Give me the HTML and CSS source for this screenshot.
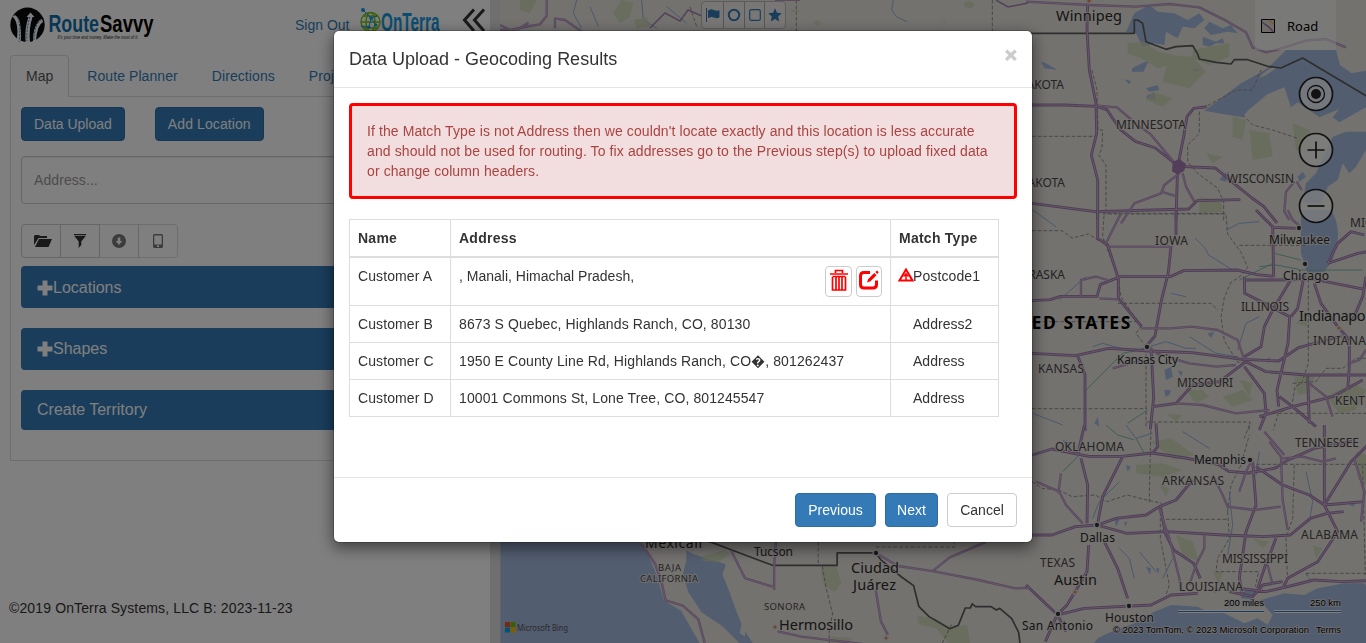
FILE: index.html
```html
<!DOCTYPE html>
<html lang="en">
<head>
<meta charset="utf-8">
<title>RouteSavvy</title>
<link rel="stylesheet" href="styles.css">
</head>
<body>
<div class="app">
  <aside class="sidebar">
    <header class="brand">
      <svg class="logo" width="146" height="36" viewBox="9 7 146 36">
        <circle cx="27.5" cy="24.8" r="17.2" fill="#0a0a0a"/>
        <path d="M15 15q5 3 5.500 12q1 9 0 15h-4q2-13-.5-20q-2-5-4-5zM25.500 42q-1-14 3-25l-2 0 4-4.500 4 4.500h-2q-4 12-2.500 25zM33 41q0-13 5-19q2-3 4-3l1 3q-6 3-7 19z" fill="#fff"/>
        <path d="M18 18q3 8 1 24M30 17q-4 12-3 24M41 20q-7 5-7 21" fill="none" stroke="#247fb8" stroke-dasharray="2 1.300"/>
        <text class="logo-a" x="48.500" y="32.300" textLength="50.500" lengthAdjust="spacingAndGlyphs">Route</text>
        <text class="logo-b" x="100" y="32.300" textLength="53.500" lengthAdjust="spacingAndGlyphs">Savvy</text>
        <text class="logo-c" x="57.500" y="39" textLength="81" lengthAdjust="spacingAndGlyphs">It's your time and money. Make the most of it.</text>
      </svg>
      <a class="signout">Sign Out</a>
      <svg class="onterra" width="82" height="30" viewBox="359 6 82 30">
        <g fill="none" stroke="#7cc522" stroke-width="1.500"><circle cx="370.500" cy="22" r="9.500"/><ellipse cx="370.500" cy="22" rx="4.500" ry="9.500"/><path d="M361 22h19M363 16h15M363 28h15"/></g>
        <path d="M363 10l8 8 6-2M371 18l-2 9-8-1M371 18l5 7" fill="none" stroke="#149be0"/>
        <g fill="#149be0"><circle cx="363" cy="10" r="2"/><circle cx="371" cy="18" r="1.800"/><circle cx="369" cy="27" r="1.500"/><circle cx="376" cy="25" r="1.500"/></g>
        <text class="onterra-t" x="381" y="30.500" textLength="58.500" lengthAdjust="spacingAndGlyphs">OnTerra</text>
      </svg>
      <svg class="collapse" width="24" height="28" viewBox="0 0 24 28"><path d="M12 2.500L2.500 13 12 24M22 2.500L12.500 13 22 24" fill="none" stroke="#333" stroke-width="3"/></svg>
    </header>
    <nav class="tabs"><a class="tab active">Map</a><a class="tab">Route Planner</a><a class="tab">Directions</a><a class="tab">Projects</a></nav>
    <section class="panel">
      <div class="actions"><button class="btn primary">Data Upload</button><button class="btn primary">Add Location</button></div>
      <div class="address">Address...</div>
      <div class="tools">
        <span class="tool"><svg width="18" height="14" viewBox="0 0 18 14"><path d="M0 11V2l1-1h4l1 1h7v2H4.500zM1 13L5 5h13l-3.500 8z" fill="#333"/></svg></span>
        <span class="tool"><svg width="14" height="14" viewBox="0 0 14 14"><path d="M1 0h12v1.300H1zM1.300 2h11.400L8.300 7.500V11L5.700 14V7.500z" fill="#333"/></svg></span>
        <span class="tool off"><svg width="14" height="14" viewBox="0 0 14 14"><path fill-rule="evenodd" d="M7 0a7 7 0 1 0 0 14A7 7 0 1 0 7 0zM5.700 3.500h2.600V7h2L7 11 3.700 7h2z" fill="#333"/></svg></span>
        <span class="tool off"><svg width="14" height="14" viewBox="0 0 14 14"><path fill-rule="evenodd" d="M3 0h8l1 1v12l-1 1H3l-1-1V1zM3.300 1.500v9h7.400v-9zM6 11.300v1.700h2v-1.700z" fill="#333"/></svg></span>
      </div>
      <div class="bar first"><svg width="16" height="16" viewBox="0 0 16 16"><path d="M5.500 .5h5v5H15.500v5h-5v5h-5v-5H.5v-5h5z" fill="#fff"/></svg>Locations</div>
      <div class="bar"><svg width="16" height="16" viewBox="0 0 16 16"><path d="M5.500 .5h5v5H15.500v5h-5v5h-5v-5H.5v-5h5z" fill="#fff"/></svg>Shapes</div>
      <div class="bar last">Create Territory</div>
    </section>
    <footer class="copyright">©2019 OnTerra Systems, LLC B: 2023-11-23</footer>
  </aside>
  <div class="splitter"></div>
  <main class="map">
    <svg width="866" height="643" viewBox="500 0 866 643">
      <defs>
        <g id="roads-n">
          <path d="M185 10L183 90 190 210 210 310 212 400 196 465 215 540V660M18 315h100l95 4 30 10 40 60 45 35 60 20 70 55 110 5 60 50 50 40 35 25 40 50M18 610l190 25 280-8 25-25 130-3M455 500l18-90 10-60 20-25 40-5M455 500l-5 160"/>
        </g>
        <g id="roads-n-thin">
          <path d="M0 5l190 10 140 5 100-8 90 10 80 40 60 35 20 45 40 15 40-10 80-25 60-5 60 25M213 317l60 5 70 60 30 20 50 60 30 35M460 520l-45 35-10 25-80 30-40 60M470 520l10 40 25 45M405 575l50 15M805 545l-25 30-5 60 15 25M812 545l15 25"/>
        </g>
        <g id="roads-c">
          <path d="M215 0v85l30 20 32 100v60l70 85M18 272l55-3 30-10h110l10-35 60-24h150l40-18 160-2 60 14 50 5M450 0v75M435 108l-8 80-20 80-20 110-30 35M18 430l130 7 100-22 80 5 40 3 130 5 150 20 110 5 60-40 130-35M155 438l22 55v170M690 0l50 50 3 150M740 52l75 3M655 200l1 50 40 20 95 50-5 80-33 140 5 50M656 210h90l120-2 150 30M865 220l20 60 50 70M940 355l30 35v80l-5 70M835 195l-20 100-20 25M800 200l-60 100-25 50-10 60-50 30M660 455l60 30 120 10h180M375 413l8 150-10 95M380 590l70-10 50-55 80-10 80-60M655 470l60 80 5 60-20 50M760 560l40 30 70 60M700 620l100-30 120-30 90-50M845 500l5 140M905 160l30-60 40-35 40 10M905 160l90-30 30-5M1020 200l-10 60-30 70"/>
        </g>
        <g id="roads-c-thin">
          <path d="M165 260v-50l45-10 35 10M250 110h180M220 265l55 3M240 100l45-90M345 355h90l60-5 80 10 60 30 20 60M260 475l90-25M390 430l100 30 80 10 60-5M450 580l80 5 100 25 100-10M785 0l15 30 30 25M970 460l30-10 20-30M850 520l50 40 20 60"/>
        </g>
        <g id="roads-s">
          <path d="M18 90l60-18 110 22h100l90-10 100 15 100 20 30 20 60 5 80-15 40-25 80-35 110-20M380 85l15-20-5-70M155 90l20-90M165 100l20 80-2 115M290 95l-60 120-15 80M215 300l55-20 90-10 40-25 50-20 50-60M18 330h60l70-25 65-5 90 25 120-5 170 10 120 5 80-5 60-50 50-15 50-5M403 245l15 80 25 50 60 40 20 45M188 360l-5 80-60 100-30 30-35 80M95 570l80-20 200-10 60-30 80-5M235 350l40 80 30 90M0 480l95 90 25 50M680 110l10 130-30 80-20 140 10 50M690 125l80 55 80 30 45 30M895 0v240l40 80-60 90-90 50-15 30M895 240l80-130 50-50M895 240l120-10M640 490l80 10 85-20 60-15 80 5 80-3M770 470l-60 10-30 35-70-15M725 400l-30 90M750 340l-30 80"/>
        </g>
        <g id="roads-s-thin">
          <path d="M30 170l70 30 20 40 50 55M105 145l-8 60M400 250l30 90 30 120 5 35M535 330v40l-25 50-20 60M560 150l30 60 15 35 80 10 80-10M640 200l20-60 20-40M730 50l35 45 5 130 15 90M770 100l60-5 60 15 40-10M985 100l30 100-10 90M725 420l15 60M715 20l60 70"/>
        </g>
        <g id="roads-sw">
          <path d="M440 25l40 60 20 60 10 45 50 15 45 40 20 75M700 45l40 80 80 25M830 20l-5 70 0 70M1125 55l60 35 100 15 130 25 110 25 43-2M1285 105l50-40 105-45M1120 160l15 90 20 40M835 280l70 15 180 22"/>
        </g>
        <g id="roads-nw"><path d="M180 75l30 15 60-12 30-5 20-25 0-50M345 85v-30l30 5 50 35M180 90l55-2 30-20"/></g>
      </defs>
      <rect class="land" x="500" width="866" height="643"/>
      <g transform="translate(490 535) scale(.3444)">
        <path class="water" d="M30 0H425l35 60 25 60 20 70 50 30 60 105H30zM570 45l20 10 45 15 50 15-10 30 20 50 20 55 20 50 35 55-35 0-60-60-60-40-40-60-15-50 10-40z"/>
        <path class="land" d="M735 235l10 20-5 40-15-10zM745 260l30-10 15 30-30 10z"/>
        <path class="green" d="M620 60l60-15 20 10-40 25-45-5zM965 90h40l15 50-20 25-30-20-10-40zM1240 235l50 5 50 30 45-10 10 60-60 0-40-50-50-10zM990 295l60 5-10 20-50-2z"/>
      </g>
      <g transform="translate(1026 0) scale(.33333)">
        <path class="water" d="M325 40l45-25 25 20 50 5 40 20 35-20 15 20-30 25-35-5-15 35-35-20-5 40-30-5-35 10-20-40-30-5zM550 65l40 20 25-10 20 25-30-5-50 10-20-20zM530 110l40 15 20-10 5 15-25 0-20 10-20-5zM535 332L625 265 645 250 690 225 725 205 780 150H930l12 45 35 25 43-8v110l-80 45-20-15 20-25-60 25-65-45-20 15-20-60-50 20-60 50-15 20-60-10zM920 410l40-15 60 0v55l-30 50-20 20-20-30-15 50-30 20-20 50-40 0-15 0 10-60 30-30z"/>
        <path class="water" d="M318 205l30-15 20-8-15 33h-35zM45 185l15 5 35 20-40-5zM360 265l35-10 5 15-30 5zM365 285l20-5 5 20-30-5zM295 238l20 5-5 10zM500 205l30 5-25 5zM580 540l15-20 15-5-10 30zM815 530l15-15 10 15-20 15z"/>
        <path class="green" d="M305 130l50-5 40 30 50 10-10 30-40 10-50-30-40-15zM430 165l70 5 40 45-50 50-80-20zM500 150l110-20v40l-60 25-50-20zM380 275l60 20-30 25-50-20zM620 350l40 10-10 60-30-10zM670 390l60 10 10 70-60 10zM800 370l50 20 10 70-50-10zM520 590l65 10 5 35-70 5zM540 460l50 10-30 20z"/>
        <path class="land" d="M695 235l30-25 25-12 0 6-30 22z"/>
        <path class="border" d="M0 100h325V60h10l15 10 10 55 60 23 30-8 50-3 15 25 5 15 50 10 45 5 10-13 40 0 60 20 40 5 65-30 230 137"/>
        <path class="state" d="M198 210l15 60 3 120 14 0-2 55-10 20 22 30v145h350M18 409h195M520 335v65l-35 35 0 50 30 35 60 45 18 40v60M650 345l30 30 60 15 75 25M530 325l100-55 50 0 25-60"/>
      </g>
      <g transform="translate(1026 210) scale(.33333)">
        <path class="water" d="M825 0h90q25 40 20 90l-15 60-25 35-50 5-20-60z"/>
        <path class="river" d="M20 0l70 50M508 85l30 30 10 20 80 50M600 60l40-20 60-5M100 270l80-70M700 320l-40 20-25 80M200 410l30-10 90 25 100-30 60 20 30 0M490 380l80 50 65 10M20 610l90 35M435 250l45 10"/>
        <path class="river teal" d="M180 540l60-60 50-50 70-15M700 170l50-5 80 15 180 0M745 130l80 20M640 210l100-50M365 600l-60 40"/>
        <path class="water" d="M415 480l20-10 5 30-20 10zM415 540l20 0-5 15-12 5zM205 640l10-20 5 30zM545 370l20-5-10 20zM455 480l15 5-5 15zM720 450l12-10-3 20z"/>
        <path class="green" d="M480 540l50 0 20 20-40 20zM590 560l60-20 30 30-60 20zM640 510l40 10-10 40zM810 340l30-30 5 40zM805 500l60-5-10 50-40 10zM420 610l50 5-20 20zM900 560l80-40 40 20-30 60-50 10z"/>
        <path class="state" d="M18 62h90l30 22 50-12 30 20M235 0l-5 80 45 120 10 60 60 90-15 20 30 40v245M230 12h370l5 60 40 55 20 45-20 25-30 20-20 45-10 60 10 70 40 65 40 0M275 280h280l20 20M640 106l200 0M847 190v270l-20 60-20 10-10 60-40 20-15 50M18 596h345M362 636h310l-3 24M800 520l70-5 30-40 50 0 40-30h30M740 610h280M18 335h320"/>
      </g>
      <g transform="translate(1026 425) scale(.33333)">
        <path class="water" d="M200 660l15-20 30-15 80-30 60-35 50-20 80 5 40 20 40-10 50 20 40-10 20-40 70-20 60 5 40-20 80-15 60 0 20 30 50 20 50 30v106z"/>
        <path class="land" d="M590 530l60-30 50 25 40 45-15 30-30-20-40 15-60-30z"/>
        <path class="water" d="M645 500l35-10 15 15-20 18-30-3zM265 280l15 5-10 20zM295 290l10 0-8 15zM300 120l15 5-10 15zM360 425l15 5-3 20zM390 430l10 0-3 18zM525 600l-10 5 0-5zM560 490l15 5-10 10zM110 45l20 5-10 15zM970 240l15-15 0 20z"/>
        <path class="green" d="M375 50l60-10 70 50-60 15zM330 120l80-5 60 20-60 20-80-10zM450 330l50 20 20 60-50-20zM400 180l30 10-10 25zM860 360l30 10-20 30zM990 80l30 10v90l-25-20zM680 340l50 10-20 20zM560 440l30 0-10 40z"/>
        <path class="state" d="M375 0l-5 210 0 25M18 170l30 20 50 5 40 20 70-5 35 20 60-20 60 15 45 10M403 245v95l15 80 12 60-10 30M420 283h185M605 260l10-80 30-60 25-90M605 260l5 80-35 60-5 40h128l-10 45M690 118h330M805 120l-5 160-20 60 5 130M1010 120l8 330M840 445h180M840 445l15 25M670 0l-15 40"/>
        <path class="river" d="M300 0l30 40 50-15M200 280l20-50 60-60M280 370l30 30 15 60M340 380l50 60M440 400l-30 60M610 200l10 100-15 90M700 80l-10 70M840 140l20 90-10 60M470 20l80 50"/>
        <path class="river teal" d="M240 0l35 30 50 15M160 90l-50 50M330 40l25 45"/>
      </g>
      <g transform="translate(640 0) scale(.33333)">
        <path class="state" d="M150 20l20 60M469 0v95M1057 0v95"/>
        <path class="river" d="M5 0l5 60 40 25M760 0l-5 30 15 20 30 15M-190 0l-10 40 25 45M-150 20l25 60M80 20l60 50"/>
        <path class="green" d="M970 10l20-8 15 10-10 12-20-2zM520 65l15-5 10 12-15 6zM905 60l10 3 3 10zM-360 0l50 0-20 40-30-10zM-80 40l25-40 35 10-10 40-30 20zM450 30l30 0-10 10zM-20 60l40-10 10 30-40 5z"/>
      </g>
      <g transform="translate(490 535) scale(.3444)">
        <path class="border" d="M600 10l40 10 60 23 120 45h188V52h112l15 20 60 50 35 25 15 60 30 30 60 35 25-10 20-50h15l5-12 10 8h45l15 10 10-5 35 30 20 40 5 40"/>
        <path class="state" d="M953 20v65M1120 35h228V0M965 90l10 60 20 80-10 40 0 50M1340 260l-30 60"/>
      </g>
      <g transform="translate(1026 0) scale(.33333)"><use href="#roads-n" class="road"/><use href="#roads-n" class="road-in"/><use href="#roads-n-thin" class="road thin"/><use href="#roads-n-thin" class="road-in"/><path d="M440 485l20-8 20 15-5 20-20 12-17-10z" fill="#a67db2"/></g>
      <g transform="translate(1026 210) scale(.33333)"><use href="#roads-c" class="road"/><use href="#roads-c" class="road-in"/><use href="#roads-c-thin" class="road thin"/><use href="#roads-c-thin" class="road-in"/></g>
      <g transform="translate(1026 425) scale(.33333)"><use href="#roads-s" class="road"/><use href="#roads-s" class="road-in"/><use href="#roads-s-thin" class="road thin"/><use href="#roads-s-thin" class="road-in"/></g>
      <g transform="translate(490 535) scale(.3444)"><use href="#roads-sw" class="road thin"/><use href="#roads-sw" class="road-in"/></g>
      <g transform="translate(440 0) scale(.33333)"><use href="#roads-nw" class="road thin"/><use href="#roads-nw" class="road-in"/></g>
      <path class="road-one" d="M650 28l15-15 15 8 8-11 14 6M775 0h25M996 0l12 7 20-4"/>
      <g class="dot"><circle cx="1299" cy="228" r="2.800"/><circle cx="1305" cy="264" r="2.800"/><circle cx="1147" cy="347" r="2.800"/><circle cx="1250" cy="460" r="2.800"/><circle cx="1097" cy="525" r="2.800"/><circle cx="1129" cy="606" r="2.800"/><circle cx="1058" cy="614" r="2.800"/><circle cx="876" cy="553" r="2.800"/></g>
      <g class="dot orange"><circle cx="1339" cy="328" r="2.200"/><circle cx="1075" cy="592" r="2.200"/><circle cx="775" cy="627" r="2.200"/><circle cx="886" cy="638" r="2.200"/><circle cx="1089" cy="1" r="2.200"/></g>
      <g class="lbl state-l">
        <text x="1064" y="89" text-anchor="end">DAKOTA</text><text x="1065" y="187" text-anchor="end">DAKOTA</text>
        <text x="1116" y="129" textLength="70">MINNESOTA</text><text x="1227" y="183" textLength="67">WISCONSIN</text>
        <text x="1155" y="245" textLength="33">IOWA</text><text x="1065" y="279" text-anchor="end">NEBRASKA</text>
        <text x="1241" y="311" textLength="48">ILLINOIS</text><text x="1350" y="227">MICH</text><text x="1313" y="345" textLength="53">INDIANA</text>
        <text x="1038" y="373" textLength="46">KANSAS</text><text x="1177" y="387" textLength="56">MISSOURI</text><text x="1335" y="405">KENTUCKY</text>
        <text x="1055" y="451" textLength="69">OKLAHOMA</text><text x="1295" y="447" textLength="64">TENNESSEE</text><text x="1162" y="485" textLength="62">ARKANSAS</text>
        <text x="1301" y="539" textLength="57">ALABAMA</text><text x="1040" y="567" textLength="35">TEXAS</text><text x="1222" y="563" textLength="66">MISSISSIPPI</text><text x="1179" y="591" textLength="64">LOUISIANA</text>
        <text class="sm" x="658" y="571" textLength="23">BAJA</text><text class="sm" x="640" y="582" textLength="58">CALIFORNIA</text><text class="sm" x="764" y="610" textLength="41">SONORA</text>
      </g>
      <g class="lbl city">
        <text x="1269" y="244" textLength="61">Milwaukee</text><text x="1283" y="280" textLength="46">Chicago</text><text x="1117" y="364" textLength="61">Kansas City</text>
        <text x="1194" y="464" textLength="52">Memphis</text><text x="1080" y="542" textLength="35">Dallas</text><text x="1105" y="622" textLength="49">Houston</text><text x="1022" y="630" textLength="71">San Antonio</text>
        <text x="754" y="556" textLength="39">Tucson</text><text class="mid" x="645" y="548" textLength="57">Mexicali</text>
        <text class="big" x="1056" y="21" textLength="66">Winnipeg</text><text class="big" x="1299" y="321" textLength="80">Indianapolis</text><text class="big" x="1054" y="585" textLength="43">Austin</text>
        <text class="big" x="851" y="573" textLength="48">Ciudad</text><text class="big" x="853" y="590" textLength="43">Juárez</text><text class="big" x="779" y="630" textLength="74">Hermosillo</text>
      </g>
      <text class="country" x="1132" y="329" text-anchor="end">UNITED STATES</text>
      <g><path fill="#f25022" d="M505 622h5v5H505z"/><path fill="#7fba00" d="M510.500 622h5v5h-5z"/><path fill="#00a4ef" d="M505 627.500h5v5h-5z"/><path fill="#ffb900" d="M510.500 627.500h5v5h-5z"/><text class="bing" x="517" y="631" textLength="51" lengthAdjust="spacingAndGlyphs">Microsoft Bing</text></g>
      <path d="M1178 611.500h86M1274 611.500h67" stroke="#fff" stroke-width="3"/><path d="M1178 611.500h86M1274 611.500h67" stroke="#3973b5"/>
      <g class="attr"><text x="1224" y="606" textLength="40">200 miles</text><text x="1310" y="606" textLength="31">250 km</text><text x="1113" y="633" textLength="196">© 2023 TomTom, © 2023 Microsoft Corporation</text><text x="1316" y="633" textLength="25">Terms</text></g>
    </svg>
    <div class="draw-tools">
      <span><svg width="16" height="14" viewBox="0 0 16 14"><path d="M1.500 0v14M3.500 2.500q3-1.500 5.500 0t5 .3v6.500q-2.500 1-5-.3t-5.500.500z" fill="#337ab7" stroke="#337ab7"/></svg></span>
      <span><svg width="14" height="14" viewBox="0 0 14 14"><circle cx="7" cy="7" r="5.200" fill="none" stroke="#337ab7" stroke-width="2"/></svg></span>
      <span><svg width="12" height="12" viewBox="0 0 12 12"><rect x=".7" y=".7" width="10.600" height="10.600" rx="1.500" fill="none" stroke="#337ab7" stroke-width="1.200"/></svg></span>
      <span><svg width="14" height="14" viewBox="0 0 14 14"><path d="M7 .3l2 4.500 4.800.5-3.600 3.200 1 4.900L7 10.900l-4.200 2.500 1-4.900L.2 5.300 5 4.800z" fill="#337ab7"/></svg></span>
    </div>
    <div class="road-type"><svg width="14" height="14" viewBox="0 0 14 14"><path d="M.5.500h13v13H.5z" fill="#ddd8c8" stroke="#000"/><path d="M1 3l4 3q4 2 7 7" fill="none" stroke="#a873b8" stroke-width="1.500"/><path d="M8 1l5 4" stroke="#e0b860" stroke-width="1.500"/></svg>Road</div>
    <div class="map-nav">
      <svg width="36" height="36" viewBox="-18 -18 36 36"><circle r="16.500"/><circle class="ring" r="8.500"/><circle class="pin" r="5"/></svg>
      <svg width="36" height="36" viewBox="-18 -18 36 36"><circle r="16.500"/><path d="M-8.500 0h17M0-8.500v17"/></svg>
      <svg width="36" height="36" viewBox="-18 -18 36 36"><circle r="16.500"/><path d="M-8.500 0h17"/></svg>
    </div>
  </main>
</div>
<div class="backdrop">
  <div class="modal">
    <div class="modal-head"><h4>Data Upload - Geocoding Results</h4><span class="close">×</span></div>
    <div class="modal-body">
      <div class="alert">If the Match Type is not Address then we couldn't locate exactly and this location is less accurate and should not be used for routing. To fix addresses go to the Previous step(s) to upload fixed data or change column headers.</div>
      <table class="results">
        <colgroup><col class="c-name"><col class="c-addr"><col class="c-type"></colgroup>
        <thead><tr><th>Name</th><th>Address</th><th>Match Type</th></tr></thead>
        <tbody>
          <tr class="flagged"><td>Customer A</td><td><div class="addr-cell"><span>, Manali, Himachal Pradesh,</span><span class="row-tools">
            <i class="mini"><svg width="18" height="23" viewBox="0 0 18 23"><path d="M0 5h18M5.500 4V1.500h7V4M2.500 8v13h13V8M2.500 7.500h13M6 8v13M9 8v13M12 8v13" fill="none" stroke="red" stroke-width="1.700"/></svg></i>
            <i class="mini"><svg width="20" height="20" viewBox="0 0 20 20"><path d="M11 2.500H5Q1.500 2.500 1.500 6v8.500Q1.500 18 5 18h9q3.500 0 3.500-3.500v-4" fill="none" stroke="red" stroke-width="3"/><path d="M8 12.500l1.200-3.500 6-6 2.300 2.300-6 6zM16.300 2L18 .5l1.700 1.700L18.200 4z" fill="red"/></svg></i>
          </span></div></td><td><div class="type"><svg width="16" height="14" viewBox="0 0 16 14"><path d="M8 1.500L1.500 12.500h13z" fill="none" stroke="red" stroke-width="2"/><path d="M8 5v7M5.500 8.500L8 6l2.500 2.500" fill="none" stroke="red" stroke-width="1.500"/></svg>Postcode1</div></td></tr>
          <tr><td>Customer B</td><td>8673 S Quebec, Highlands Ranch, CO, 80130</td><td class="ind">Address2</td></tr>
          <tr><td>Customer C</td><td>1950 E County Line Rd, Highlands Ranch, CO�, 801262437</td><td class="ind">Address</td></tr>
          <tr><td>Customer D</td><td>10001 Commons St, Lone Tree, CO, 801245547</td><td class="ind">Address</td></tr>
        </tbody>
      </table>
    </div>
    <div class="modal-foot"><button class="btn primary prev">Previous</button><button class="btn primary next">Next</button><button class="btn cancel">Cancel</button></div>
  </div>
</div>
</body>
</html>
```
FILE: styles.css
```css
* { box-sizing: border-box; }
body { margin: 0; height: 643px; overflow: hidden; font: 14px/20px "Liberation Sans", Arial, sans-serif; color: #333; background: #fff; }
.app { display: flex; height: 643px; }
.sidebar { width: 490px; flex: none; display: flex; flex-direction: column; padding: 7px 10px 0; }
.splitter { width: 10px; flex: none; background: #dedede; }
.brand { height: 48px; display: flex; align-items: flex-start; }
.brand > * { flex: none; }
.logo { margin-left: -1px; overflow: visible; }
.logo text { font-family: "Liberation Sans", Arial, sans-serif; }
.logo-a, .logo-b { font-size: 24px; font-weight: bold; fill: #0d6fae; }
.logo-b { fill: #000; }
.logo-c { font-size: 5px; font-style: italic; fill: #222; }
.signout { color: #337ab7; margin: 8px 0 0 140px; width: 55px; white-space: nowrap; }
.onterra { margin: -1px 0 0 9px; overflow: visible; }
.onterra-t { font: bold 26px "Liberation Sans", Arial, sans-serif; fill: #149be0; }
.collapse { margin-left: 21px; }
.tabs { display: flex; border-bottom: 1px solid #ddd; height: 42px; }
.tab { height: 42px; padding: 10px 15px; border: 1px solid transparent; border-radius: 4px 4px 0 0; margin-right: 2px; color: #337ab7; letter-spacing: .08px; }
.tab.active { color: #555; border-color: #ddd; border-bottom-color: #fff; background: #fff; letter-spacing: 0; }
.panel { border: 1px solid #ddd; border-top: 0; height: 364px; padding: 10px 10px 0; }
.actions { display: flex; gap: 30px; }
.actions .btn + .btn { letter-spacing: .1px; }
.btn { height: 34px; padding: 6px 12px; font: 14px/20px "Liberation Sans", Arial, sans-serif; border: 1px solid #ccc; border-radius: 4px; background: #fff; color: #333; }
.primary { background: #337ab7; border-color: #2e6da4; color: #fff; }
.address { margin-top: 15px; height: 48px; border: 1px solid #ccc; border-radius: 4px; padding: 13px 12px; color: #999; box-shadow: inset 0 1px 1px rgba(0,0,0,.075); letter-spacing: .08px; }
.tools { display: flex; margin: 20px 0 8px; height: 34px; }
.tool { width: 40px; margin-right: -1px; border: 1px solid #ccc; display: flex; align-items: center; justify-content: center; }
.tool:first-child { border-radius: 4px 0 0 4px; padding-left: 3px; }
.tool:last-child { border-radius: 0 4px 4px 0; }
.tool.off { opacity: .65; }
.bar { height: 42px; margin-bottom: 20px; border-radius: 4px; background: #337ab7; color: #fff; font-size: 16px; display: flex; align-items: center; padding-left: 16px; }
.bar.first { padding-top: 1px; }
.bar.last { height: 40px; margin: 0; }
.copyright { margin: 137px 0 0 -1px; letter-spacing: .13px; }
.map { position: relative; width: 866px; flex: none; overflow: hidden; }
.map > svg { display: block; }
.water { fill: #a6bbe0; }
.land { fill: #e6e4df; }
.green { fill: #c9d6ae; opacity: .7; }
.river { fill: none; stroke: #93b2dc; stroke-width: 3; }
.river.teal { stroke: #7cbcab; }
.state { fill: none; stroke: #94928d; stroke-width: 3; stroke-dasharray: 11 6; }
.border { fill: none; stroke: #5c5c5c; stroke-width: 5; stroke-linejoin: round; }
.road { fill: none; stroke: #9d78aa; stroke-width: 8.5; stroke-linejoin: round; }
.road.thin { stroke-width: 7; stroke: #b08cba; }
.road-in { fill: none; stroke: #ccb0d2; stroke-width: 3; stroke-linejoin: round; }
.road-one { fill: none; stroke: #a883b2; stroke-width: 1.5; }
.dot { fill: #333; stroke: #ddd; stroke-width: 1.3; }
.dot.orange { fill: #e88950; }
.lbl { font-family: "Noto Sans", sans-serif; paint-order: stroke; stroke: #e6e4df; stroke-width: 2px; stroke-opacity: .8; }
.state-l { font-size: 12px; fill: #4c4644; }
.sm { font-size: 9.5px; }
.city { font-size: 12px; fill: #2b2b2b; }
.mid { font-size: 14px; }
.big { font-size: 14.5px; }
.country { font: bold 17.5px "Noto Sans", sans-serif; letter-spacing: 1.6px; fill: #000; }
.bing { font: 9px "Noto Sans", sans-serif; fill: #555; }
.attr { font: 9.5px "Liberation Sans", Arial, sans-serif; fill: #000; paint-order: stroke; stroke: #ddd; stroke-width: 1.5px; }
.draw-tools { position: absolute; left: 201px; top: 1px; display: flex; height: 28px; background: rgba(255,255,255,.4); border: 1px solid #bbb; border-radius: 4px; }
.draw-tools span { width: 20px; display: flex; align-items: center; justify-content: center; border-right: 1px solid #aaa; }
.draw-tools span:first-child { width: 22px; }
.draw-tools span:nth-child(2) { width: 21px; }
.draw-tools span:last-child { border: 0; }
.road-type { position: absolute; left: 755px; top: 0; width: 81px; height: 50px; background: rgba(255,255,255,.5); padding: 1px 0 0 6px; display: flex; align-items: center; gap: 12px; font: 13px "Noto Sans", sans-serif; color: #000; }
.map-nav { position: absolute; left: 798px; top: 76px; display: flex; flex-direction: column; gap: 20px; }
.map-nav circle, .map-nav path { fill: none; stroke: #222; stroke-width: 1.7; }
.map-nav circle:first-child { fill: rgba(255,255,255,.75); }
.map-nav .ring { stroke-width: 1.3; }
.map-nav .pin { fill: #222; stroke: none; }
.backdrop { position: fixed; inset: 0; background: rgba(0,0,0,.5); padding-top: 30px; }
.modal { width: 700px; height: 513px; margin: 0 auto; background: #fff; background-clip: padding-box; border: 1px solid rgba(0,0,0,.2); border-radius: 6px; box-shadow: 0 5px 15px rgba(0,0,0,.5); }
.modal-head { height: 57px; border-bottom: 1px solid #e5e5e5; padding: 15px; display: flex; justify-content: space-between; }
.modal-head h4 { margin: 0; font-size: 18px; line-height: 26px; font-weight: 500; }
.close { font-size: 21px; font-weight: bold; line-height: 17px; color: #ccc; -webkit-text-stroke: 1px #ccc; }
.modal-body { height: 389px; padding: 15px; }
.alert { border: 3px solid red; border-radius: 4px; background: #f2dede; color: #a94442; padding: 15px; height: 96px; margin-bottom: 20px; letter-spacing: .1px; }
.results { width: 650px; border-collapse: collapse; table-layout: fixed; letter-spacing: .1px; }
.c-name { width: 101px; }
.c-addr { width: 440px; }
.results th, .results td { border: 1px solid #ddd; padding: 8px; text-align: left; vertical-align: top; }
.results th { border-bottom-width: 2px; letter-spacing: .25px; }
.results td.ind { padding-left: 22px; letter-spacing: .03px; }
.results .flagged td { height: 48px; }
.addr-cell { display: flex; justify-content: space-between; height: 31px; }
.row-tools { display: flex; gap: 4px; }
.addr-cell > span:first-child { letter-spacing: 0; }
.mini { width: 27px; height: 31px; border: 1px solid #ccc; border-radius: 4px; display: flex; justify-content: center; align-items: center; padding-bottom: 3px; }
.mini + .mini { width: 26px; }
.type { display: flex; margin-left: -1px; white-space: nowrap; }
.type svg { margin: 2px -1px 0 0; flex: none; }
.modal-foot { border-top: 1px solid #e5e5e5; padding: 15px; display: flex; justify-content: flex-end; gap: 9px; }
.modal-foot .btn { padding: 6px 0; }
.prev { width: 81px; }
.next { width: 53px; }
.cancel { width: 70px; }
```
